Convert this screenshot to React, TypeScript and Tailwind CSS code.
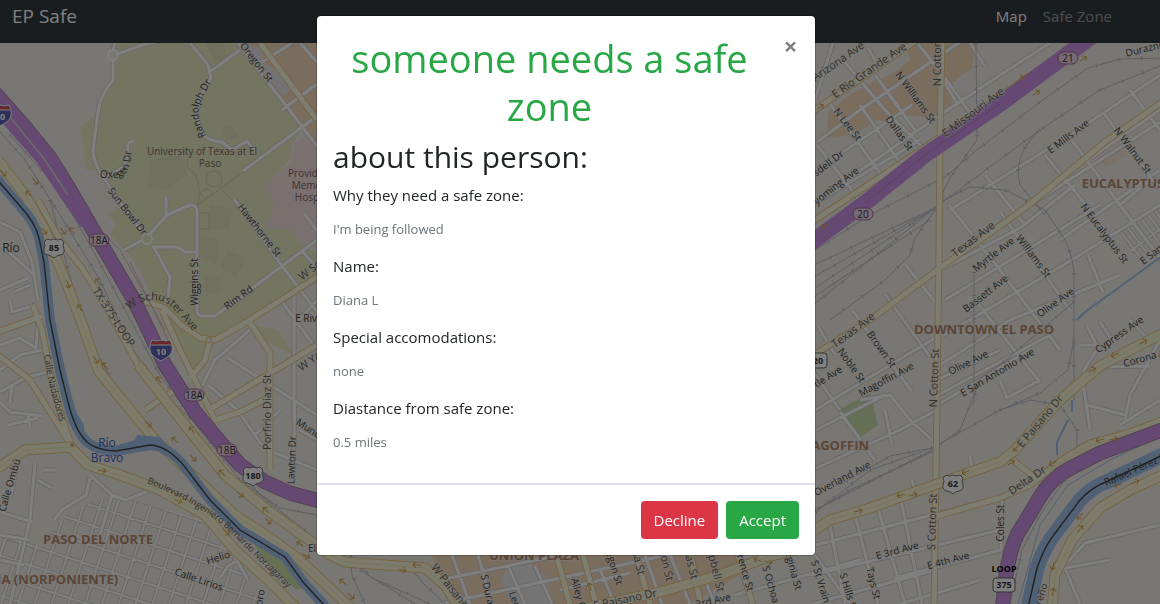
import { useState } from "react";

type Point = [number, number];
type Label = { text: string; x: number; y: number; angle?: number; size?: number };

const residential = [
  // campus and sunset heights
  "M115 43 L113 50 M113 61 L113 80 Q100 95 98 112 L93 150 Q93 160 100 172 L125 210 L143 233",
  "M118 54 L145 44 L165 40 M190 43 L208 65 L211 78 L201 95 L196 115 L203 135 Q212 142 222 142 L232 150 L247 141 L256 152",
  "M211 71 L240 50 M238 43 L270 85 L317 146 M243 171 L317 116 M262 62 L292 43 M282 110 L317 84",
  "M300 43 L317 62 M134 141 Q126 141 128 150 L125 166 L105 178 M166 197 L166 215",
  "M167 215 L190 205 Q197 204 197 212 L197 310",
  "M167 215 L150 234 M153 246 L170 277 L168 297 L162 310 M152 247 L178 247 L185 252 L196 252 M141 241 L124 250",
  "M197 310 Q197 317 205 316 L215 316 L317 240 M234 199 L282 266 L317 312 M302 251 L317 268 M304 213 L317 231",
  "M294 288 L294 420 M281 300 L317 350 M317 300 L294 326 M200 390 L215 360 L250 330 M228 358 L317 415",
  "M239 412 L262 445 M255 435 L280 410 M273 452 L317 470 M295 400 L293 480 M300 430 L317 440 M208 385 L240 412",
  // west bank
  "M0 222 L20 232 L32 262 L38 300 M0 245 L18 260 L34 275 M0 290 L28 278 M14 292 L30 285 M10 300 L12 312 L36 305",
  "M0 345 L20 338 L36 348 L38 322 M0 370 L20 355 L42 350 M0 392 L25 378 L47 372 M12 385 L10 402 M0 402 L10 412 L42 416",
  "M8 425 L38 418 M28 414 L30 428 M18 460 L10 500 M0 512 L32 522 M35 463 L30 520 L10 604 M42 470 L56 470 M38 480 L52 488",
  "M90 475 L112 495 L126 500 L150 490 M90 478 L86 495 L62 510 L54 520 M0 535 L30 540 M0 560 L24 565 M112 495 L100 535",
  "M205 515 L232 552 L248 580 M248 555 L228 566 L220 578",
  // north east blocks
  "M817 142 L860 110 L975 32 M812 173 L912 105 M835 188 L940 115 L1000 75 L1050 43 M812 205 L920 140",
  "M843 60 L885 110 L935 160 M868 48 L875 60 M915 40 L945 78 L970 113 M940 75 L958 105 M830 104 L885 180 M817 145 L858 198",
  "M815 100 L833 43 M970 43 L985 66 M875 75 L915 130 M860 105 L905 170",
  "M1088 160 L1160 110 M950 210 L1075 132 L1160 75 M970 243 L1160 122 M1103 112 L1160 190 M1130 90 L1160 130",
  "M1045 155 L1090 210 M1068 135 L1120 205 L1180 285 M985 175 L1025 225 M1060 240 L1160 170",
  "M1075 185 L1020 228 L944 268 M949 205 L1000 270 L1060 350 M1001 213 L1070 310 M945 300 L1100 205",
  "M944 335 L1075 258 L1160 205 M940 365 L1010 320 L1120 275 M975 300 L1030 370 L1040 382 M938 395 L1050 335",
  "M905 264 L935 302 M885 294 L930 357 M853 311 L912 392 M818 326 L835 355 M840 410 L812 370 M812 412 L940 335",
  "M937 405 L1030 350 M1000 380 L1007 398 L1040 380 M885 395 L812 432 M1120 205 L1150 180 M1088 255 L1103 292",
  "M937 380 L1000 350 M1080 345 L1100 345 M1087 326 L1098 348 L1084 370 L1082 390 M1100 322 L1112 340 M1130 320 L1145 336",
  "M1082 375 L1090 430 M1098 367 L1150 366 M1160 340 L1130 395 L1125 420 M1120 425 L1160 400 M1087 405 L1125 415",
  // south east blocks
  "M812 546 L990 500 M812 575 L1000 530 M812 604 L935 570 M830 525 L845 604 M855 515 L878 604 M878 508 L905 604",
  "M901 500 L922 604 M1002 500 L1001 550 L895 578 M900 604 L980 580 M970 455 L972 470 M912 480 L915 490 M812 470 L900 430 L940 408",
  "M885 410 L892 445 M840 412 L875 460 M860 400 L890 395 L910 420 L930 438 M1110 560 L1065 568 L1080 604 M1068 562 L1085 543 L1160 525",
  // downtown strip
  "M452 555 L470 604 M478 555 L492 604 M508 566 L525 604 M535 566 L552 604 M600 570 L615 604 M645 555 L662 604",
  "M440 580 L560 555 M440 604 L700 548 M560 590 L630 573 M670 555 L690 604 M705 580 L715 604 M735 595 L860 560 M815 555 L850 604",
];

const arterials = [
  "M33 305 L42 330 L50 372 L62 418 L72 447 M-2 332 L42 316 M-2 355 L30 380 L72 447",
  "M38 200 L60 240 L82 268 L105 305 L138 365 L175 410",
  "M317 277 L245 323 L215 340 L200 338 L180 324 L165 308 L148 302 L130 305 M210 340 L205 360 L190 378 M162 310 L180 350 L215 420 L240 412 L268 398",
  "M250 323 L270 353 L270 470 M212 408 L317 345 M145 410 L175 390",
  "M260 43 L317 120 M812 112 L920 38 M812 222 L918 152 L1062 54 L1085 34",
  "M812 356 L870 320 L940 268 L1025 208 L1105 142 L1165 100",
  "M937 516 L1000 498 L1030 485 L1060 462 M1013 460 L1035 478",
  "M942 40 L940 140 L939 250 L937 400 L934 610",
  "M735 545 L755 612 M582 550 L598 612 M555 550 L572 612 M635 550 L652 612 M690 550 L702 612",
];

const highways = [
  "M-2 160 L25 195 L45 230 L55 255 L70 292 L85 332 L98 370 L118 395 L155 440 L200 482 L235 515 L270 538 L300 560 L355 612",
  "M-2 468 L25 450 L70 447 L88 465 L120 475 L160 490 L205 515 L235 550 L270 582 L300 612",
  "M138 365 L185 425 L225 475 L270 512 L330 555 L345 562 L425 568 L445 585 L462 612",
  "M812 532 L830 520 L870 508 L940 483 L965 474 L1000 462 L1015 450 L1060 400 L1100 366 L1130 350 L1165 332",
  "M1045 475 L1065 460 L1090 445 L1130 434 L1165 421",
  "M1052 612 L1055 575 L1072 540 L1100 508 L1130 490 L1165 474",
  "M585 608 L660 592 L720 575 L765 558 L812 545",
];

const motorways = [
  "M-6 92 L25 127 L50 158 L70 190 L100 242 L135 302 L165 365 L195 412 L215 436 L240 465 L265 482 L290 493 L330 504",
  "M1095 34 L1000 104 L925 155 L865 203 L805 247",
  "M1002 612 L1006 575 Q1010 550 1017 535 L1040 497 Q1050 480 1067 470 L1100 453 L1165 429",
];

const river = [
  "M-6 176 L20 206 Q35 222 39 238 L44 262 L50 320 L60 370 L68 402 Q75 430 86 441 Q95 450 116 451 L150 445 Q168 446 185 467 L210 500 L240 530 L262 543 L285 557 L303 582 L325 606",
  "M1027 612 L1037 568 Q1045 545 1056 532 L1080 500 Q1092 487 1106 482 L1165 454",
];

const rails = [
  "M0 132 L25 160 L60 215 L100 280 L130 345 L170 400 L215 440 L260 495 L317 540",
  "M10 135 L55 185 L90 245 L125 310 L160 375 L200 430 L240 480 L280 508 L317 515",
  "M50 200 L68 270 L80 310 L92 345 L115 385 L145 430",
  "M976 43 L977 140 L950 178 L935 208 L812 290",
  "M1165 58 L1120 59 L1088 68 L1040 102 L977 150 L945 177 L870 215 L812 252",
  "M1165 64 L1100 90 L1040 130 L983 172 L935 208 L812 306",
  "M1040 130 Q1012 155 1020 185 L1045 215",
  "M940 202 L970 187 L1005 190 L1045 210 L1065 240 Q1075 262 1074 280 L1074 400",
  "M935 208 L812 266 M935 208 L812 278 M930 220 L812 298",
  "M935 210 L915 238 L910 255 L885 280 L830 320",
  "M974 272 L974 395 L960 430 L932 450 L812 512",
  "M1074 302 L1000 365 L978 380 L973 405",
  "M1074 340 L1068 370 L1040 393 L1000 410 L932 448 L870 470 L812 515",
  "M932 452 L850 490 L812 512 M932 448 L890 456 L840 485",
  "M1000 410 L1030 400 L1060 405 L1077 430 L1077 460",
  "M350 556 L352 575 L365 604 M350 556 L372 578 L430 604 M350 556 L380 569 L411 569 L423 583 L445 604 M360 570 L415 604",
  "M1065 480 L1040 515 L1022 550 L1010 604",
];

const labels: Label[] = [
  { text: "Oregon St", x: 257, y: 62, angle: 52 },
  { text: "Sun Bowl Dr", x: 128, y: 211, angle: 52 },
  { text: "Hawthorne St", x: 260, y: 230, angle: 52 },
  { text: "Wiggins St", x: 194, y: 282, angle: -90 },
  { text: "Rim Rd", x: 238, y: 297, angle: -37 },
  { text: "E River", x: 311, y: 318 },
  { text: "Lawton Dr", x: 291, y: 460, angle: -88 },
  { text: "Mund", x: 309, y: 428, angle: 33 },
  { text: "Helio", x: 218, y: 557, angle: -18 },
  { text: "Calle Lirios", x: 199, y: 579, angle: 19 },
  { text: "Toro", x: 259, y: 600, angle: -80 },
  { text: "Calle Ombú", x: 9, y: 485, angle: -74 },
  { text: "N Lee St", x: 848, y: 124, angle: 52 },
  { text: "Dallas St", x: 900, y: 133, angle: 54 },
  { text: "N Williams St", x: 916, y: 97, angle: 54 },
  { text: "Blaisdell Dr", x: 821, y: 168, angle: -37 },
  { text: "Wyoming Ave", x: 832, y: 188, angle: -38 },
  { text: "E Mills Ave", x: 1068, y: 136, angle: -37 },
  { text: "N Walnut St", x: 1133, y: 150, angle: 53 },
  { text: "Durazno", x: 1145, y: 48, angle: -14 },
  { text: "N Eucalyptus St", x: 1105, y: 233, angle: 53 },
  { text: "E San", x: 1151, y: 254, angle: -38 },
  { text: "Myrtle Ave", x: 993, y: 254, angle: -38 },
  { text: "Williams St", x: 1034, y: 256, angle: 53 },
  { text: "Bassett Ave", x: 985, y: 293, angle: -38 },
  { text: "Olive Ave", x: 1055, y: 302, angle: -36 },
  { text: "Olive Ave", x: 968, y: 362, angle: -26 },
  { text: "E San Antonio Ave", x: 997, y: 372, angle: -31 },
  { text: "Cypress Ave", x: 1119, y: 334, angle: -35 },
  { text: "Corona Ave", x: 1149, y: 356, angle: -16 },
  { text: "Brown St", x: 882, y: 349, angle: 54 },
  { text: "Noble St", x: 852, y: 365, angle: 54 },
  { text: "Magoffin Ave", x: 886, y: 379, angle: -28 },
  { text: "Myrtle Ave", x: 820, y: 381, angle: -32 },
  { text: "Overland Ave", x: 842, y: 478, angle: -28 },
  { text: "E 3rd Ave", x: 897, y: 550, angle: -15 },
  { text: "E 4th Ave", x: 948, y: 560, angle: -15 },
  { text: "Coles St", x: 1000, y: 523, angle: -90 },
  { text: "S St Vrain St", x: 823, y: 587, angle: 73 },
  { text: "S Hills St", x: 849, y: 592, angle: 73 },
  { text: "Tays St", x: 874, y: 583, angle: 76 },
  { text: "S Durango", x: 490, y: 598, angle: 77 },
  { text: "Leon St", x: 518, y: 608, angle: 72 },
  { text: "Alley C", x: 579, y: 593, angle: 74 },
  { text: "Oregon St", x: 613, y: 562, angle: 72 },
  { text: "Florence St", x: 744, y: 566, angle: 74 },
  { text: "Virginia St", x: 793, y: 567, angle: 74 },
  { text: "S Ochoa St", x: 773, y: 590, angle: 74 },
  { text: "3rd Ave", x: 713, y: 600, angle: -13 },
  { text: "Río", x: 11, y: 248, size: 12 },
];

// main roads carry a lighter, slightly larger label
const roadLabels: Label[] = [
  { text: "TX-375-LOOP", x: 114, y: 317, angle: 57 },
  { text: "W Sch", x: 312, y: 268, angle: -38 },
  { text: "W Yan", x: 312, y: 359, angle: -35 },
  { text: "Porfirio Diaz St", x: 267, y: 412, angle: -90 },
  { text: "E Rio Grande Ave", x: 869, y: 70, angle: -35 },
  { text: "Arizona Ave", x: 838, y: 61, angle: -35 },
  { text: "E Missouri Ave", x: 973, y: 112, angle: -37 },
  { text: "N Cotton St", x: 937, y: 57, angle: -90 },
  { text: "N Cotton St", x: 934, y: 378, angle: -88 },
  { text: "S Cotton St", x: 932, y: 522, angle: -88 },
  { text: "Texas Ave", x: 973, y: 239, angle: -37 },
  { text: "Texas Ave", x: 853, y: 330, angle: -37 },
  { text: "E Paisano Dr", x: 1040, y: 421, angle: -50 },
  { text: "Delta Dr", x: 1027, y: 480, angle: -34 },
  { text: "E Paisano Dr", x: 625, y: 599, angle: -12 },
  { text: "W Paisano Dr", x: 455, y: 592, angle: 52 },
  { text: "Campbell St", x: 714, y: 562, angle: 76 },
  { text: "Kansas St", x: 689, y: 555, angle: 76 },
  { text: "Stanton St", x: 664, y: 555, angle: 76 },
  { text: "Mesa St", x: 637, y: 555, angle: 76 },
];

const districts: Label[] = [
  { text: "PASO DEL NORTE", x: 98, y: 540 },
  { text: "CHAVEÑA (NORPONIENTE)", x: 33, y: 580 },
  { text: "EUCALYPTUS", x: 1123, y: 184 },
  { text: "DOWNTOWN EL PASO", x: 984, y: 330 },
  { text: "MAGOFFIN", x: 834, y: 446 },
  { text: "UNION PLAZA", x: 534, y: 556 },
];

const exits: Label[] = [
  { text: "18A", x: 99, y: 240 },
  { text: "18A", x: 194, y: 395 },
  { text: "18B", x: 227, y: 450 },
  { text: "20", x: 863, y: 214 },
  { text: "21", x: 1068, y: 58 },
];

const arrows: [number, number, number][] = [
  [3, 173, 50], [35, 181, 50], [29, 194, 225], [44, 231, 55], [63, 231, 55], [72, 231, 235], [98, 282, 235],
  [68, 284, 70], [80, 308, 240], [96, 360, 60], [105, 366, 230], [159, 380, 235], [148, 424, 40], [192, 430, 235],
  [175, 440, 220], [193, 458, 45], [102, 471, 10], [178, 501, 20], [226, 532, 42], [222, 473, 225], [240, 494, 40],
  [266, 510, 225], [268, 521, 45], [300, 544, 210], [306, 556, 30], [343, 582, 220], [351, 596, 40], [402, 570, 5],
  [417, 565, 185], [820, 107, -35], [1024, 76, 145], [1036, 93, -35], [1083, 59, -35], [825, 226, 145],
  [901, 495, 165], [913, 495, -15], [858, 511, -15], [966, 472, 160], [1011, 463, -35], [1016, 448, 130],
  [1053, 463, 150], [1100, 440, 165], [1114, 439, -10], [1115, 355, 155], [1143, 342, -25], [1092, 370, -30],
  [1080, 516, 135], [1080, 529, -50], [1053, 566, 105], [1053, 592, -75], [1118, 485, 155], [1135, 482, -20],
  [590, 587, 255], [758, 560, 200], [768, 562, 20],
];

const details = [
  { label: "Why they need a safe zone:", value: "I'm being followed" },
  { label: "Name:", value: "Diana L" },
  { label: "Special accomodations:", value: "none" },
  { label: "Diastance from safe zone:", value: "0.5 miles" },
];

function Roads({ paths, casing, fill, width }: { paths: string[]; casing: string; fill: string; width: number }) {
  const d = paths.join(" ");
  return (
    <g fill="none" strokeLinejoin="round">
      <path d={d} stroke={casing} strokeWidth={width + 2} />
      <path d={d} stroke={fill} strokeWidth={width} />
    </g>
  );
}

function MapLabels({ items, color, size, weight }: { items: Label[]; color: string; size: number; weight?: number }) {
  return (
    <g fill={color} fontWeight={weight} textAnchor="middle" stroke="#f2efe9" strokeWidth="2" strokeOpacity="0.6" paintOrder="stroke">
      {items.map((l) => (
        <text key={`${l.text}-${l.x}`} fontSize={l.size ?? size} dy="4" transform={`translate(${l.x} ${l.y}) rotate(${l.angle ?? 0})`}>
          {l.text}
        </text>
      ))}
    </g>
  );
}

// parallel streets, clipped to the neighbourhood they belong to
function StreetGrid({ id, area, origin, angle, cols, rows }: { id: string; area: string; origin: Point; angle: number; cols: number; rows: number }) {
  const across = Array.from({ length: 16 }, (_, i) => `M-120 ${i * rows} H320`).join(" ");
  const down = Array.from({ length: 26 }, (_, i) => `M${(i - 6) * cols} -40 V260`).join(" ");
  return (
    <g clipPath={`url(#${id})`}>
      <clipPath id={id}>
        <polygon points={area} />
      </clipPath>
      <g transform={`translate(${origin[0]} ${origin[1]}) rotate(${angle})`}>
        <Roads paths={[across, down]} casing="#d6d2cc" fill="#fff" width={2} />
      </g>
    </g>
  );
}

function UsShield({ x, y, text }: { x: number; y: number; text: string }) {
  return (
    <g transform={`translate(${x} ${y})`}>
      <path
        d="M-7 -9 Q-4 -7 0 -9 Q4 -7 7 -9 L10 -6 Q8 -3 10 1 Q11 6 6 7 Q2 8 0 10 Q-2 8 -6 7 Q-11 6 -10 1 Q-8 -3 -10 -6 Z"
        fill="#fff"
        stroke="#777"
      />
      <text fontSize="9" fontWeight="700" textAnchor="middle" y="3" fill="#333">
        {text}
      </text>
    </g>
  );
}

function InterstateShield({ x, y }: { x: number; y: number }) {
  return (
    <g transform={`translate(${x} ${y})`}>
      <path d="M-9 -10 Q-4 -8 0 -10 Q4 -8 9 -10 Q14 0 8 6 Q4 9 0 11 Q-4 9 -8 6 Q-14 0 -9 -10 Z" fill="#5a61b4" stroke="#fff" />
      <path d="M-9 -9 Q-4 -7 0 -9 Q4 -7 9 -9 L10 -5 H-10 Z" fill="#de4a4a" />
      <path d="M-10 -5 H10" stroke="#fff" />
      <text fontSize="9" fontWeight="700" textAnchor="middle" y="5" fill="#fff">
        10
      </text>
    </g>
  );
}

function CityMap() {
  return (
    <svg
      viewBox="0 43 1160 561"
      preserveAspectRatio="xMidYMid slice"
      className="block min-h-0 w-full flex-1 bg-[#f2efe9]"
      role="img"
      aria-label="Map of El Paso"
    >
      <polygon
        fill="#e7ebc0"
        points="116,43 240,43 270,85 302,128 292,145 290,160 265,185 275,205 262,230 290,228 304,247 317,252 317,276 245,322 210,338 208,360 193,376 165,322 140,270 125,250 110,235 116,225 108,214 122,205 100,172 85,169 84,150 80,127 97,115 101,105 113,80"
      />
      <polygon fill="#e7ebc0" points="255,325 278,330 290,348 294,355 262,340" />
      <path
        fill="#dfe0bd"
        d="M205 43 h18 l5 15 -12 4z M222 127 l10 -2 6 12 -12 4z M150 160 l30 -6 8 20 -20 16 -20 -4z M210 205 l22 4 -2 20 -20 0z M200 235 l20 6 -4 24 -16 -8z M228 250 l18 8 -10 18 -16 -8z M205 275 l16 4 -2 16 -14 -4z"
      />
      <polygon fill="#f4e0e0" points="295,143 317,125 317,247 303,247 290,228 262,230 275,205 265,185 291,162" />
      <polygon fill="#f7dabd" points="248,43 317,43 317,148 303,128 270,85" />
      <polygon fill="#e8e6e8" points="245,48 262,46 263,64 278,70 293,90 282,95 268,78" />
      <polygon fill="#f7dabd" points="827,137 828,112 850,95 880,78 888,55 915,43 976,43 972,68 950,85 953,108 935,118 900,115 892,122 875,120 860,132 835,138" />
      <polygon fill="#f2efe9" points="868,62 893,50 908,52 910,60 895,72 883,78 868,82" />
      <polygon fill="#f7e2d6" points="1097,158 1120,145 1128,155 1106,168" />
      <polygon fill="#f7dabd" points="430,550 735,550 740,575 690,604 465,604 440,580" />
      <polygon fill="#ebe8ea" points="500,580 508,567 525,560 545,575 553,604 512,604" />
      <polygon fill="#c8dfaa" points="838,410 870,393 878,425 858,439" />
      <polygon fill="#cfe0a5" points="250,538 282,557 303,588 296,590 262,557" />

      <g fill="none" stroke="#d0cda8">
        <circle cx="214" cy="179" r="8" />
        <path d="M188 160 Q184 168 195 174 Q202 190 198 205 M198 205 L243 172 M206 188 l-6 6 6 4 8 -4z M198 213 h11 v16 h-11z M222 190 L248 215" />
      </g>

      <StreetGrid id="grid-norte" area="68,512 112,495 130,500 205,520 235,555 260,604 0,604 0,535 40,545" origin={[75, 480]} angle={18} cols={16} rows={19} />
      <StreetGrid id="grid-parking" area="1120,232 1160,202 1160,235 1138,262" origin={[1118, 228]} angle={-37} cols={8} rows={26} />
      <Roads paths={residential} casing="#d6d2cc" fill="#fff" width={3} />

      <g fill="none" stroke="#bcbcc8">
        <path d={rails.join(" ")} />
        <path d={rails.join(" ")} strokeWidth="4" strokeDasharray="1 22" />
      </g>

      <Roads paths={arterials} casing="#ecc987" fill="#fcfae2" width={5} />
      <Roads paths={highways} casing="#e9c67e" fill="#fbf9d8" width={9} />
      <path d={highways.join(" ")} fill="none" stroke="#eed9a0" strokeWidth="0.6" />
      <path d="M95 225 L120 250 L165 330 M110 265 L150 345 M130 262 L168 340" fill="none" stroke="#d4bcbc" />

      <path d={river[0]} fill="none" stroke="#a0c0ea" strokeWidth="10" />
      <path d={river[1]} fill="none" stroke="#a0c0ea" strokeWidth="15" />
      <path d="M115 446 L135 440 L137 435 L160 437 L172 452 L150 447 Z M70 402 L84 425 L84 434 L76 430 Z" fill="#a0c0ea" />
      <path d={river.join(" ")} fill="none" stroke="#444" strokeWidth="1.4" />
      <path d="M1077 320 L1085 312 L1165 254 M1072 400 L1072 412 M1068 420 L1057 442 V455" fill="none" stroke="#a0c0ea" strokeWidth="2" />
      <path d="M1165 434 L1110 460 L1068 485 L1040 525 L1018 604" fill="none" stroke="#a0c0ea" />

      <g fill="none" strokeLinejoin="round">
        <path d={motorways.join(" ")} stroke="#a487a4" strokeWidth="15" />
        <path d={motorways.join(" ")} stroke="#cb93e6" strokeWidth="13" />
        <path d={motorways[1]} stroke="#cb93e6" strokeWidth="16" />
        <path d="M-6 107 L40 159 L64 195 L85 225" stroke="#cb93e6" strokeWidth="9" />
        <path d="M-6 98 L20 129 L45 160 L68 195" stroke="#ded0da" strokeWidth="1.5" />
        <path d="M1000 104 L925 155 L865 203" stroke="#b381cb" />
      </g>

      <g fill="none" stroke="#dba64e">
        {arrows.map(([x, y, angle]) => (
          <path key={`${x}-${y}`} d="M-4 0 H4 M1 -3 L4 0 L1 3" transform={`translate(${x} ${y}) rotate(${angle})`} />
        ))}
      </g>
      <g stroke="#dedad4" fill="#f2efe9">
        <circle cx="113" cy="55" r="5" stroke="#fff" strokeWidth="2" />
        <circle cx="147" cy="239" r="5" fill="#e7ebc0" stroke="#fff" strokeWidth="2" />
        <circle cx="209" cy="340" r="3" stroke="#e9c67e" />
        <circle cx="72" cy="445" r="2" fill="#dba64e" />
      </g>

      <MapLabels items={labels} color="#444" size={10} />
      <MapLabels items={roadLabels} color="#666255" size={11} />
      <MapLabels items={districts} color="#b58a6c" size={13} weight={700} />
      <defs>
        <path id="randolph" d="M206 136 Q196 118 199 106 Q203 94 218 72" />
        <path id="oxegen" d="M100 178 H112 Q127 178 130 164 L133 140" />
        <path id="schuster" d="M129 310 Q148 294 168 304 Q184 318 204 346" />
        <path id="nadadores" d="M44 355 Q49 392 64 432" />
        <path id="norzagaray" d="M147 483 Q195 502 224 526 Q258 560 300 600" />
        <path id="perez" d="M1106 486 L1240 427" />
        <path id="rivereno" d="M1036 624 L1056 556" />
      </defs>
      <g fontSize="10" fill="#444">
        <text>
          <textPath href="#randolph">Randolph Dr</textPath>
        </text>
        <text>
          <textPath href="#oxegen">Oxegen Dr</textPath>
        </text>
        <text>
          <textPath href="#perez">Rafael Pérez Serna</textPath>
        </text>
        <g fill="#666255">
          <text fontSize="11">
            <textPath href="#schuster">W Schuster Ave</textPath>
          </text>
          <text fontSize="9">
            <textPath href="#nadadores">Calle Nadadores</textPath>
          </text>
          <text fontSize="9">
            <textPath href="#norzagaray">Boulevard Ingeniero Bernardo Norzagaray</textPath>
          </text>
          <text>
            <textPath href="#rivereno">Rivereño</textPath>
          </text>
        </g>
      </g>
      <g fontSize="10" fill="#7d6464" textAnchor="middle">
        <text x="202" y="155">University of Texas at El</text>
        <text x="210" y="167">Paso</text>
        <text x="314" y="177">Providence</text>
        <text x="314" y="189">Memorial</text>
        <text x="314" y="201">Hospital</text>
      </g>
      <g fontSize="12" fill="#3a5fc8" textAnchor="middle">
        <text x="107" y="447">Río</text>
        <text x="107" y="462">Bravo</text>
      </g>
      <text x="308" y="552" fontSize="10" fill="#2b6080">
        El Paso
      </text>

      {exits.map((e) => (
        <g key={`${e.text}-${e.x}`}>
          <rect x={e.x - 10} y={e.y - 6} width="20" height="12" rx="6" fill="#ecd5ee" stroke="#a06a94" />
          <text x={e.x} y={e.y + 4} fontSize="10" fill="#333" textAnchor="middle">
            {e.text}
          </text>
        </g>
      ))}
      <UsShield x={54} y={248} text="85" />
      <UsShield x={253} y={476} text="180" />
      <UsShield x={953} y={484} text="62" />
      <InterstateShield x={161} y={350} />
      <InterstateShield x={0} y={115} />
      <g fontSize="9" fontWeight="700" textAnchor="middle" fill="#333">
        <rect x="993" y="578" width="22" height="14" rx="3" fill="#fff" stroke="#666" />
        <text x="1004" y="588">375</text>
        <text x="1004" y="572" fill="#000">
          LOOP
        </text>
        <rect x="805" y="353" width="22" height="15" rx="3" fill="#fff" stroke="#666" />
        <text x="818" y="364">20</text>
      </g>
    </svg>
  );
}

function RequestModal({ onClose }: { onClose: () => void }) {
  return (
    <div className="fixed inset-0 flex items-start justify-center overflow-y-auto bg-black/50 pt-[15px] pr-7">
      <div role="dialog" aria-modal="true" aria-labelledby="request-title" className="w-full max-w-[500px] rounded-[5px] border border-black/20 bg-white bg-clip-padding">
        <div className="flex items-start pt-[18px] pl-4">
          <h1 id="request-title" className="flex-1 text-center text-[38px] leading-12 text-[#28a745]">
            someone needs a safe zone
          </h1>
          <button type="button" aria-label="Close" onClick={onClose} className="w-[49px] text-2xl leading-6 font-bold text-black/50">
            ×
          </button>
        </div>
        <div className="px-4 pt-2 pb-4">
          <h2 className="mb-2 text-[30px] leading-[37px]">about this person:</h2>
          <dl>
            {details.map((d) => (
              <div key={d.label} className="mb-[13px]">
                <dt className="mb-[10px] leading-6">{d.label}</dt>
                <dd className="text-[13px] leading-6 text-[#6c757d]">{d.value}</dd>
              </div>
            ))}
          </dl>
        </div>
        <div className="flex justify-end gap-2 border-t-2 border-[#dee2e6] p-4">
          <button type="button" onClick={onClose} className="rounded bg-[#dc3545] px-[13px] py-[7px] leading-6 text-white">
            Decline
          </button>
          <button type="button" onClick={onClose} className="rounded bg-[#28a745] px-[13px] py-[7px] leading-6 text-white">
            Accept
          </button>
        </div>
      </div>
    </div>
  );
}

export default function App() {
  const [open, setOpen] = useState(true);

  return (
    <div className="flex min-h-screen flex-col font-['Open_Sans',sans-serif] text-[15px] text-[#212529]">
      <nav className="flex items-center justify-between bg-[#343a40] pt-[3px] pr-12 pb-[13px] pl-3 text-white">
        <a href="#" className="text-[19px] leading-[27px]">
          EP Safe
        </a>
        <div className="flex gap-4">
          <a href="#map">Map</a>
          <a href="#safe-zone" className="text-white/50">
            Safe Zone
          </a>
        </div>
      </nav>
      <CityMap />
      {open && <RequestModal onClose={() => setOpen(false)} />}
    </div>
  );
}
